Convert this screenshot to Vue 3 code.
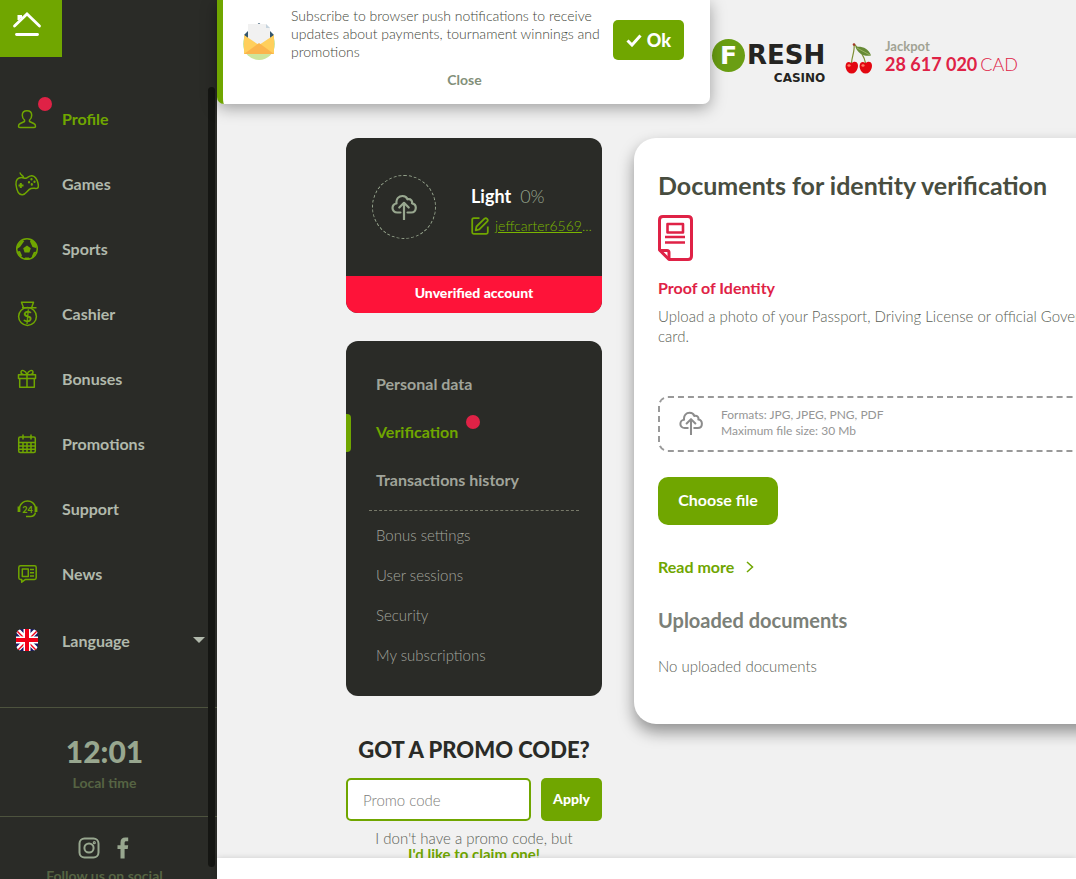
<template>
  <div class="app">
    <aside class="sidebar">
      <a href="#" class="home" aria-label="Home">
        <svg width="30" height="26" viewBox="0 0 30 26" fill="none" stroke="#fff">
          <path d="M6.500 9V5H9v2" fill="#fff" stroke-width="2" />
          <path d="M2.500 15 15 3l12.500 12" stroke-width="2.800" stroke-linecap="round" />
          <path d="M4.500 23.500h21" stroke-width="2.800" stroke-linecap="round" />
        </svg>
      </a>

      <nav class="nav">
        <a
          v-for="item in navItems"
          :key="item.name"
          href="#"
          class="nav-item"
          :class="{ active: item.active }"
        >
          <span class="nav-icon">
            <svg width="26" height="26" viewBox="0 0 26 26" class="icon">
              <g v-if="item.name === 'Profile'">
                <path d="M10.500 14c-1.600-1.200-2.200-3-2.200-4.800C8.300 6.500 10.200 4.800 13 4.800s4.700 1.700 4.700 4.400c0 1.800-.6 3.600-2.200 4.800v1.500l4.200 2c1.300.6 1.800 1.500 1.800 2.700 0 .8-.5 1.300-1.300 1.300H5.800c-.8 0-1.300-.5-1.300-1.300 0-1.200.5-2.100 1.800-2.700l4.200-2z" />
              </g>
              <g v-else-if="item.name === 'Games'">
                <path d="M2 13.500C1.500 9 4 6.500 7.500 6.500c2 0 3 1.200 4.500.8 2-.5 3-2.800 6-2.500 3.500.3 5 3.500 6 7.500.8 3.400.3 4.700-1 5-2 .4-3.500-.5-6 .2-3.500 1-5 6-8.500 6.300C4 24.300 2.500 18 2 13.500zM9.500 6.500C9.500 4.500 6.200 4.300 6 1.500" />
                <path d="M6.800 12v5M4.500 14.500h5" stroke-width="2" />
                <path d="M17.500 8v.5M20.500 10.500v.5M15 11v.5M17.800 13.200v.5" stroke-width="2.200" stroke-linecap="round" />
              </g>
              <g v-else-if="item.name === 'Sports'">
                <circle cx="13" cy="13" r="10.300" />
                <path class="solid" d="m13 9.500 3.800 2.700-1.400 4.300h-4.800l-1.400-4.300zM3 9.500 8.300 4l2 1-4.300 6L2.800 13zM17 3l5.500 5-.5 4-3.500-1-2.500-5.500zM3 15.500l3-.5 2 4.500-1.500 2zM22.800 15.500l-3 .5-2 4.500 1.200 1.500zM11 21.500h4l1 2h-6z" />
              </g>
              <g v-else-if="item.name === 'Cashier'">
                <circle cx="13.500" cy="15.500" r="8.900" />
                <path d="M9.500 6.800 7.500 1.300h12L17.600 6.800M8 6.800h14.500" />
                <text x="13.500" y="21" text-anchor="middle" class="dollar">$</text>
              </g>
              <g v-else-if="item.name === 'Bonuses'">
                <path d="M4.500 8.700h17V12.500h-17zM5.700 12.500h14.600v8.700H5.700zM13 8.500v12.700M13 8.500C11.500 4 7.200 3.500 7 6c0 1.500 1 2.500 2.500 2.500M13 8.500C14.500 4 18.800 3.500 19 6c0 1.500-1 2.500-2.500 2.500" />
              </g>
              <g v-else-if="item.name === 'Promotions'">
                <rect x="4.700" y="6" width="16.600" height="15.600" rx="1.500" />
                <path d="M9 3.500v5M17 3.500v5M5 11.500h16.500M5 15h16.500M5 18.300h16.500M9 11.500v10M13 11.500v10M17 11.500v10" />
              </g>
              <g v-else-if="item.name === 'Support'">
                <path d="M5.500 11C7 6.800 9.500 4.900 13.500 4.900s6.800 2 8 6.100M21.500 16.500c-.7 2.800-2.300 4-5 4H12" />
                <path d="M5 10.500v5.500M22 10.500v5.500" stroke-width="2.800" />
                <text x="13.500" y="16.500" text-anchor="middle" class="hours">24</text>
              </g>
              <g v-else>
                <path d="M6.500 4.700h14c1 0 1.700.7 1.700 1.700v10.300c0 1-.7 1.700-1.700 1.700H11.500l-3.800 2.800v-2.800H6.500c-1 0-1.700-.7-1.700-1.700V6.400c0-1 .7-1.700 1.700-1.700zM8.300 8h6v7.500h-6zM16 8.500h4M16 11.700h4M16 15h4" />
              </g>
            </svg>
            <span v-if="item.active" class="dot nav-dot"></span>
          </span>
          {{ item.name }}
        </a>

        <button type="button" class="nav-item language">
          <span class="nav-icon">
            <svg width="22" height="22" viewBox="0 0 22 22">
              <clipPath id="flag"><rect width="22" height="22" rx="6" /></clipPath>
              <g clip-path="url(#flag)">
                <path fill="#171a66" d="M0 0h22v22H0z" />
                <path stroke="#fff" stroke-width="5" d="m0 0 22 22M22 0 0 22" />
                <path stroke="#f00018" stroke-width="1.400" d="m0 1 21 21M23 0 1 22" />
                <path stroke="#fff" stroke-width="7" d="M11 0v22M0 11h22" />
                <path stroke="#f00018" stroke-width="4" d="M11 0v22M0 11h22" />
              </g>
            </svg>
          </span>
          Language
          <span class="caret"></span>
        </button>
      </nav>

      <div class="clock">
        <div class="clock-time">12:01</div>
        <div class="clock-label">Local time</div>
      </div>

      <div class="social">
        <div class="social-links">
          <a href="#" aria-label="Instagram">
            <svg width="22" height="22" viewBox="0 0 22 22" fill="none" stroke="#98a78f" stroke-width="2">
              <rect x="1.500" y="1.500" width="19" height="19" rx="5" />
              <circle cx="11" cy="11" r="4.600" />
              <circle cx="16.300" cy="5.700" r=".6" />
            </svg>
          </a>
          <a href="#" aria-label="Facebook">
            <svg width="12" height="22" viewBox="0 0 12 22" fill="#98a78f">
              <path d="M3.500 21.500V12H.5V8.200h3V5.500C3.500 2.300 5.300.5 8.200.5h3v3.700H9.300c-1.300 0-1.700.6-1.700 1.700v2.300h3.600L10.700 12H7.600v9.500z" />
            </svg>
          </a>
        </div>
        <div class="social-label">Follow us on social</div>
      </div>

      <div class="scrollbar"></div>
    </aside>

    <main class="main">
      <header class="header">
        <a href="#" class="logo" aria-label="Fresh Casino">
          <span class="logo-circle">F</span>
          <span class="logo-words">
            <span class="logo-resh">RESH</span>
            <span class="logo-casino">CASINO</span>
          </span>
        </a>
        <svg class="cherry" width="28" height="31" viewBox="0 0 28 31">
          <path d="M9 1.500C10 8 7 13 6.500 20M9.500 1.500C15 7 19 12 20.500 20" fill="none" stroke="#7d8f35" stroke-width="1.200" />
          <path d="M10.500 4c6-1 13 1 15.500 8.500-7 1.500-13-2-15.500-8.500z" fill="#668a35" />
          <path d="m12 5 13 7" stroke="#a5bb6b" stroke-width=".8" />
          <path d="M6.500 20c5-3.500 7.500.5 6.200 5-1 3.500-3 5.500-6 5.500S1.500 28.500.8 25c-.8-4.500 1.500-8 5.700-5z" fill="#e30711" />
          <path d="M20.500 20c5-3.500 7.500.5 6.200 5-1 3.500-3 5.500-6 5.500s-5.200-2-5.900-5.500c-.8-4.500 1.500-8 5.700-5z" fill="#e30711" />
          <ellipse cx="4" cy="22.500" rx="1.600" ry="1.200" fill="#ff7f68" />
          <ellipse cx="18" cy="22.500" rx="1.600" ry="1.200" fill="#ff7f68" />
          <circle cx="9" cy="1.500" r="1.300" fill="#a4392a" />
        </svg>
        <div class="jackpot">
          <div class="jackpot-label">Jackpot</div>
          <div class="jackpot-sum"><b>28 617 020</b><span>CAD</span></div>
        </div>
      </header>

      <div class="content">
        <div class="left">
          <section class="profile">
            <div class="profile-body">
              <button type="button" class="avatar" aria-label="Upload photo">
                <svg width="26" height="26" viewBox="0 0 26 26" class="cloud">
                  <path d="M9.500 18.500H6.200C3.500 18.500 1.500 16.500 1.500 14s2-4.500 4-4.500C4.800 4.500 8 2 11.500 2c3 0 4.500 1.800 5 3.300 3.500-.8 5 1.700 4.500 4 2.300.4 3.800 2.200 3.800 4.500 0 2.700-1.800 4.700-4.500 4.700h-3.800M13 25.500V9.500M8.300 13.500 13 8.800l4.700 4.700" />
                </svg>
              </button>
              <div class="profile-info">
                <div class="level"><b>Light</b><span>0%</span></div>
                <a href="#" class="email">
                  <svg width="18" height="18" viewBox="0 0 18 18" class="edit">
                    <path d="M8.500 1.200H2.700c-1 0-1.500.6-1.500 1.500v12.600c0 1 .6 1.500 1.500 1.500h12.600c1 0 1.500-.6 1.500-1.500V9.500" />
                    <path d="m5.500 9.500 8-7.800c1.800-1.500 4.200.8 2.800 2.700l-8 8-3.600.9z" />
                  </svg>
                  <span><u>jeffcarter6569</u>...</span>
                </a>
              </div>
            </div>
            <div class="status">Unverified account</div>
          </section>

          <nav class="menu">
            <a
              v-for="item in mainLinks"
              :key="item"
              href="#"
              class="menu-main"
              :class="{ current: item === 'Verification' }"
            >
              {{ item }}
              <span v-if="item === 'Verification'" class="dot menu-dot"></span>
            </a>
            <hr class="menu-line">
            <a v-for="item in subLinks" :key="item" href="#" class="menu-sub">{{ item }}</a>
          </nav>

          <section class="promo">
            <h2>GOT A PROMO CODE?</h2>
            <form class="promo-form" @submit.prevent>
              <input v-model="promoCode" type="text" placeholder="Promo code" aria-label="Promo code">
              <button type="submit">Apply</button>
            </form>
            <p>I don't have a promo code, but<br><a href="#">I'd like to claim one!</a></p>
          </section>
        </div>

        <section class="documents">
          <h1>Documents for identity verification</h1>
          <svg class="doc-icon" width="35" height="46" viewBox="0 0 35 46">
            <path d="M5 1.500h25c2.500 0 3.500 1 3.500 3.500v36c0 2.500-1 3.500-3.500 3.500H11L1.500 35V5c0-2.500 1-3.500 3.500-3.500z" />
            <path d="M1.500 35.500H9c1.500 0 2 .7 2 2v7" />
            <path d="M9.500 9h15.500v8.500H9.500zM7 22h20M7 27.500h20" stroke-width="2.600" />
          </svg>
          <h3>Proof of Identity</h3>
          <p class="doc-text">
            Upload a photo of your Passport, Driving License or official Government ID<br>card.
          </p>
          <div class="dropzone">
            <svg width="24" height="24" viewBox="0 0 26 26" class="cloud">
              <path d="M9.500 18.500H6.200C3.500 18.500 1.500 16.500 1.500 14s2-4.500 4-4.500C4.800 4.500 8 2 11.500 2c3 0 4.500 1.800 5 3.300 3.500-.8 5 1.700 4.500 4 2.300.4 3.800 2.200 3.800 4.500 0 2.700-1.800 4.700-4.500 4.700h-3.800M13 25.500V9.500M8.300 13.500 13 8.800l4.700 4.700" />
            </svg>
            <div>Formats: JPG, JPEG, PNG, PDF<br>Maximum file size: 30 Mb</div>
          </div>
          <button type="button" class="choose">Choose file</button>
          <a href="#" class="read-more">
            Read more
            <svg width="8" height="12" viewBox="0 0 8 12"><path d="m1 1 5.500 5L1 11" /></svg>
          </a>
          <h2 class="uploaded">Uploaded documents</h2>
          <p class="empty">No uploaded documents</p>
        </section>
      </div>
    </main>

    <div class="bottom-bar"></div>

    <div v-if="showPush" class="push">
      <svg class="push-icon" width="32" height="38" viewBox="0 0 32 38">
        <circle cx="16" cy="21" r="16" fill="#cde59b" />
        <path d="M1 11 16 0l15 11v8H1z" fill="#fff" />
        <path d="M1 12 5 8v8zM31 12l-4-4v8zM14 1.500 16 0l2 1.500z" fill="#35566d" />
        <path d="M5 1h18l4 4v19H5z" fill="#f1f1f1" />
        <path d="M23 1v4h4z" fill="#c5d3dd" />
        <path d="M1 12v19h30V12L16 22z" fill="#ffcf5c" />
        <path d="m1 31 15-11 15 11z" fill="#fbb44c" />
      </svg>
      <div class="push-body">
        <p>Subscribe to browser push notifications to receive updates about payments, tournament winnings and promotions</p>
        <button type="button" class="push-close" @click="showPush = false">Close</button>
      </div>
      <button type="button" class="push-ok" @click="showPush = false">
        <svg width="16" height="13" viewBox="0 0 16 13"><path d="m1.500 6.500 4.500 4.500L14.500 1.500" /></svg>
        Ok
      </button>
    </div>
  </div>
</template>

<script setup>
import { ref } from 'vue'

const navItems = [
  { name: 'Profile', active: true },
  { name: 'Games' },
  { name: 'Sports' },
  { name: 'Cashier' },
  { name: 'Bonuses' },
  { name: 'Promotions' },
  { name: 'Support' },
  { name: 'News' }
]

const mainLinks = ['Personal data', 'Verification', 'Transactions history']
const subLinks = ['Bonus settings', 'User sessions', 'Security', 'My subscriptions']

const promoCode = ref('')
const showPush = ref(true)
</script>

<style>
body {
  background: #f1f1f1;
}
</style>

<style scoped>
* {
  box-sizing: border-box;
}

.app {
  position: relative;
  display: flex;
  height: 100vh;
  overflow: hidden;
  font-family: Lato, "Liberation Sans", sans-serif;
  color: #5b5f56;
}

h1, h2, h3, p {
  margin: 0;
}

a {
  color: inherit;
  text-decoration: none;
}

button {
  padding: 0;
  border: 0;
  background: none;
  font-family: inherit;
  cursor: pointer;
}

svg {
  flex: none;
}

.dot {
  position: absolute;
  width: 14px;
  height: 14px;
  border-radius: 50%;
  background: #df2246;
}

/* Sidebar */
.sidebar {
  position: relative;
  flex: none;
  width: 217px;
  overflow: hidden;
  background: #2a2b27;
}

.home {
  display: flex;
  justify-content: center;
  width: 62px;
  height: 57px;
  margin-bottom: 29px;
  padding: 11px 8px 0 0;
  background: #70a600;
}

.nav {
  padding-bottom: 33px;
  border-bottom: 1px solid #4d533e;
}

.nav-item {
  display: flex;
  align-items: center;
  width: 100%;
  height: 65px;
  font-size: 16px;
  font-weight: 700;
  color: #b1b9ac;
}

.nav-item.active {
  color: #70a600;
}

.language {
  height: 68px;
}

.nav-icon {
  position: relative;
  display: flex;
  justify-content: center;
  width: 54px;
  margin-right: 8px;
}

.nav-dot {
  top: -9px;
  right: 2px;
}

.icon {
  fill: none;
  stroke: #70a600;
  stroke-width: 1.5;
  stroke-linejoin: round;
}

.icon .solid,
.icon text {
  fill: #70a600;
  stroke: none;
}

.dollar {
  font-size: 16px;
  font-weight: 700;
}

.hours {
  font-size: 9px;
  font-weight: 900;
}

.caret {
  margin-left: auto;
  margin-right: 12px;
  border: 6px solid transparent;
  border-top-color: #b1b9ac;
  border-bottom: 0;
}

.clock {
  height: 109px;
  padding: 23px 8px 0 0;
  border-bottom: 1px solid #4d533e;
  text-align: center;
}

.clock-time {
  font-size: 30px;
  line-height: 40px;
  font-weight: 900;
  color: #98a78f;
}

.clock-label,
.social-label {
  font-size: 14px;
  line-height: 20px;
  font-weight: 700;
  color: #566443;
}

.clock-label {
  margin-top: 2px;
}

.social {
  padding: 20px 8px 0 0;
  text-align: center;
}

.social-links {
  display: flex;
  justify-content: center;
  gap: 17px;
  height: 22px;
  margin-bottom: 7px;
  padding-right: 2px;
}

.scrollbar {
  position: absolute;
  top: 87px;
  right: 2px;
  bottom: 12px;
  width: 7px;
  border-radius: 4px;
  background: #151613;
}

/* Header */
.main {
  flex: 1;
  min-width: 0;
  overflow: hidden;
}

.header {
  display: flex;
  height: 138px;
  padding: 39px 0 0 495px;
  white-space: nowrap;
}

.logo {
  display: flex;
  gap: 2px;
  width: 116px;
  margin-right: 17px;
  color: #252422;
  font-family: "DejaVu Sans", sans-serif;
  font-weight: 700;
}

.logo-circle {
  display: flex;
  align-items: center;
  justify-content: center;
  flex: none;
  width: 33px;
  height: 33px;
  border-radius: 50%;
  background: #6a9e13;
  color: #fff;
  font-size: 25px;
}

.logo-words {
  display: flex;
  flex-direction: column;
  align-items: flex-end;
}

.logo-resh {
  font-size: 26px;
  line-height: 33px;
}

.logo-casino {
  font-size: 12px;
  line-height: 12px;
}

.cherry {
  margin: 4px 12px 0 0;
}

.jackpot-label {
  font-size: 13px;
  line-height: 14px;
  font-weight: 700;
  color: #a1a394;
}

.jackpot-sum {
  display: flex;
  gap: 3px;
  font-size: 18px;
  line-height: 22px;
  font-weight: 300;
  color: #df2246;
}

.jackpot-sum b {
  font-weight: 700;
}

/* Content */
.content {
  display: flex;
  align-items: flex-start;
  gap: 32px;
  padding-left: 129px;
}

.left {
  flex: none;
  width: 256px;
}

.profile {
  overflow: hidden;
  border-radius: 12px;
  background: #2a2b27;
}

.profile-body {
  display: flex;
  gap: 35px;
  padding: 37px 12px 37px 26px;
}

.avatar {
  display: flex;
  align-items: center;
  justify-content: center;
  flex: none;
  width: 64px;
  height: 64px;
  border: 1px dashed #98a78f;
  border-radius: 50%;
}

.cloud {
  fill: none;
  stroke: #98a78f;
  stroke-width: 2.2;
  stroke-linecap: round;
  stroke-linejoin: round;
}

.profile-info {
  padding-top: 9px;
}

.level {
  display: flex;
  gap: 9px;
  font-size: 18px;
  line-height: 24px;
  font-weight: 300;
  color: #98a78f;
}

.level b {
  font-weight: 700;
  color: #fff;
}

.email {
  display: flex;
  align-items: center;
  gap: 6px;
  margin-top: 8px;
  font-size: 14px;
  line-height: 20px;
  font-weight: 300;
  color: #7ab500;
}

.edit {
  fill: none;
  stroke: #70a600;
  stroke-width: 1.8;
  stroke-linejoin: round;
}

.status {
  padding-bottom: 3px;
  font-size: 14px;
  line-height: 34px;
  font-weight: 900;
  color: #fff;
  text-align: center;
  background: #fe1339;
}

.menu {
  margin-top: 28px;
  padding: 18px 0 21px;
  border-radius: 12px;
  background: #2a2b27;
}

.menu a {
  display: flex;
  align-items: center;
  padding-left: 30px;
}

.menu-main {
  position: relative;
  height: 48px;
  font-size: 16px;
  font-weight: 700;
  color: #a0a49a;
}

.menu-main.current {
  color: #70a600;
}

.menu-main.current::before {
  content: "";
  position: absolute;
  top: 7px;
  left: 0;
  width: 5px;
  height: 38px;
  border-radius: 0 4px 4px 0;
  background: #70a600;
}

.menu-dot {
  top: 8px;
  left: 120px;
}

.menu-line {
  margin: 7px 23px 4px;
  border: 0;
  border-top: 1px dashed #777969;
}

.menu-sub {
  height: 40px;
  font-size: 15px;
  font-weight: 300;
  color: #a3a59e;
}

.promo {
  margin-top: 40px;
  text-align: center;
}

.promo h2 {
  font-size: 22px;
  line-height: 28px;
  font-weight: 900;
  color: #2a2b27;
  white-space: nowrap;
}

.promo-form {
  display: flex;
  gap: 10px;
  margin: 14px 0 9px;
}

.promo-form input {
  flex: 1;
  min-width: 0;
  height: 43px;
  padding: 0 15px;
  border: 2px solid #70a600;
  border-radius: 5px;
  background: #fff;
  font-family: inherit;
  font-size: 15px;
  font-weight: 300;
}

.promo-form input::placeholder {
  color: #7c7c79;
}

.promo-form button {
  width: 61px;
  padding-bottom: 3px;
  border-radius: 5px;
  background: #70a600;
  color: #fff;
  font-size: 14px;
  font-weight: 900;
}

.promo p {
  font-size: 15px;
  line-height: 16px;
  font-weight: 300;
}

.promo p a {
  font-weight: 700;
  color: #70a600;
}

/* Documents */
.documents {
  flex: 1 0 560px;
  margin-right: -120px;
  padding: 32px 24px 48px;
  border-radius: 22px;
  background: #fff;
  box-shadow: 0 8px 16px rgba(0, 0, 0, 0.4);
}

.documents h1 {
  font-size: 25px;
  line-height: 30px;
  padding-bottom: 2px;
  font-weight: 700;
  color: #484d3f;
}

.doc-icon {
  display: block;
  margin-top: 13px;
  fill: none;
  stroke: #df2246;
  stroke-width: 3;
  stroke-linejoin: round;
}

.documents h3 {
  margin-top: 17px;
  font-size: 16px;
  line-height: 20px;
  font-weight: 700;
  color: #df2246;
}

.doc-text {
  margin-top: 8px;
  font-size: 15px;
  line-height: 20px;
  font-weight: 300;
  white-space: nowrap;
}

.dropzone {
  display: flex;
  align-items: center;
  gap: 18px;
  height: 56px;
  margin-top: 50px;
  padding: 0 0 2px 19px;
  border: 2px dashed #999;
  border-radius: 10px;
  font-size: 12px;
  line-height: 16px;
  color: #969696;
}

.dropzone .cloud {
  stroke: #8c8c8c;
}

.choose {
  display: block;
  width: 120px;
  height: 48px;
  margin-top: 25px;
  padding-bottom: 3px;
  border-radius: 10px;
  background: #70a600;
  color: #fff;
  font-size: 16px;
  font-weight: 700;
}

.read-more {
  display: flex;
  align-items: center;
  gap: 12px;
  margin-top: 32px;
  font-size: 16px;
  line-height: 20px;
  font-weight: 700;
  color: #70a600;
}

.read-more svg {
  fill: none;
  stroke: #70a600;
  stroke-width: 1.5;
}

.uploaded {
  margin-top: 31px;
  font-size: 20px;
  line-height: 24px;
  font-weight: 700;
  color: #7b8078;
}

.empty {
  margin-top: 24px;
  font-size: 15px;
  line-height: 20px;
  font-weight: 300;
}

/* Overlays */
.bottom-bar {
  position: absolute;
  left: 217px;
  right: 0;
  bottom: 0;
  height: 21px;
  background: #fff;
  box-shadow: 0 0 6px rgba(0, 0, 0, 0.15);
}

.push {
  position: absolute;
  top: 0;
  left: 217px;
  display: flex;
  width: 493px;
  height: 104px;
  padding: 0 26px 0 20px;
  border-left: 6px solid #70a600;
  border-radius: 0 0 7px 7px;
  background: #fff;
  box-shadow: 0 4px 16px rgba(0, 0, 0, 0.35);
}

.push-icon {
  margin: 23px 16px 0 0;
}

.push-body {
  flex: 1;
  padding: 7px 0 0;
  font-size: 14px;
  line-height: 18px;
  font-weight: 300;
  color: #3f4639;
}

.push-close {
  display: block;
  margin: 9px auto 0;
  padding-left: 33px;
  font-size: 14px;
  line-height: 20px;
  font-weight: 700;
  color: #83907a;
}

.push-ok {
  display: flex;
  align-items: center;
  justify-content: center;
  gap: 5px;
  flex: none;
  width: 71px;
  height: 40px;
  margin: 20px 0 0 8px;
  border-radius: 5px;
  background: #70a600;
  color: #fff;
  font-size: 18px;
  font-weight: 900;
}

.push-ok svg {
  fill: none;
  stroke: #fff;
  stroke-width: 3;
}
</style>
